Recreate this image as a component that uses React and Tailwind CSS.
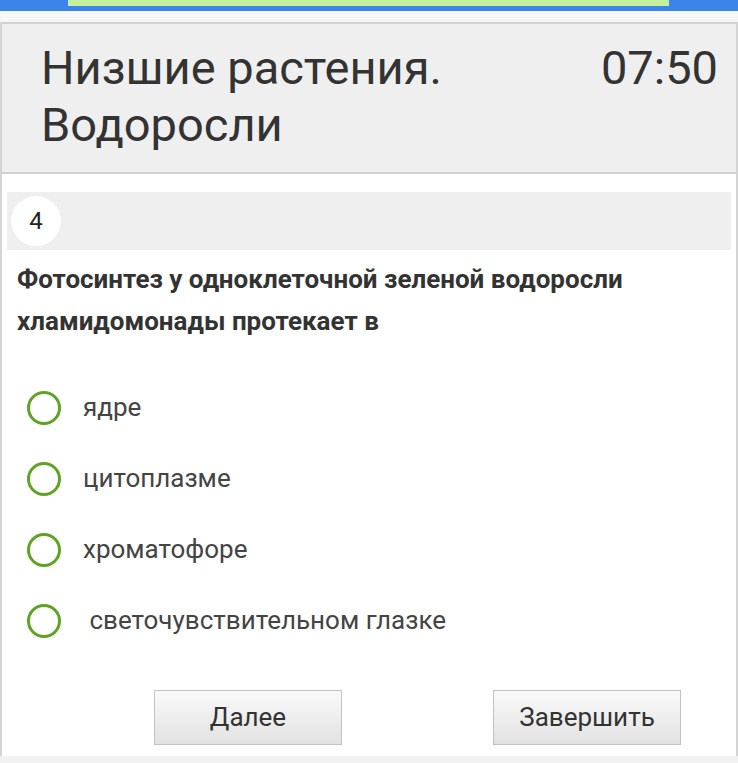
import React, { useState } from "react";

const options = [
  "ядре",
  "цитоплазме",
  "хроматофоре",
  "\u00a0светочувствительном глазке",
];

const App = () => {
  const [selected, setSelected] = useState(null);

  return (
    <div
      className="w-full h-[763px] bg-white overflow-hidden text-[#333]"
      style={{ fontFamily: "Roboto, 'Noto Sans', sans-serif" }}
    >
      {/* Top bar */}
      <div className="h-[11px] bg-[#3d84ea]">
        <div className="ml-[68px] w-[601px] h-[6px] bg-[#c4ef9d]" />
      </div>
      <div className="h-[11px] bg-[#f6f6f6]" />

      <div className="border-x-2 border-[#d4d4d4] h-[734px] flex flex-col">
        {/* Header */}
        <div className="bg-[#efefef] border-y-2 border-[#d0d0d0] h-[152px] pl-[39px] pr-[18px] pt-[15px] flex justify-between items-start">
          <h1 className="text-[47px] leading-[57px] font-normal text-[#333]">
            Низшие растения.
            <br />
            Водоросли
          </h1>
          <span className="text-[47px] leading-[57px] text-[#333]">07:50</span>
        </div>

        {/* Question */}
        <div className="flex-1 px-[5px] pt-[18px]">
          <div className="h-[58px] bg-[#efefef] flex items-center pl-[4px]">
            <div className="w-[50px] h-[50px] rounded-full bg-white flex items-center justify-center text-[24px] text-[#222]">
              4
            </div>
          </div>

          <p className="mt-[8px] pl-[10px] text-[26px] leading-[42px] font-bold text-[#333]">
            Фотосинтез у одноклеточной зеленой водоросли
            <br />
            хламидомонады протекает в
          </p>

          <div className="mt-[30px]">
            {options.map((opt, i) => (
              <label
                key={i}
                className="h-[71px] flex items-center cursor-pointer"
                onClick={() => setSelected(i)}
              >
                <span className="ml-[20px] w-[34px] h-[34px] rounded-full border-[3px] border-[#5ea323] flex items-center justify-center">
                  {selected === i && (
                    <span className="w-[16px] h-[16px] rounded-full bg-[#5ea323]" />
                  )}
                </span>
                <span className="ml-[22px] text-[26px] text-[#444]">{opt}</span>
              </label>
            ))}
          </div>

          <div className="mt-[34px] flex">
            <button className="ml-[147px] w-[188px] h-[55px] border border-[#c2c2c2] bg-gradient-to-b from-[#fafafa] to-[#e2e2e2] text-[26px] text-[#333]">
              Далее
            </button>
            <button className="ml-[151px] w-[188px] h-[55px] border border-[#c2c2c2] bg-gradient-to-b from-[#fafafa] to-[#e2e2e2] text-[26px] text-[#333]">
              Завершить
            </button>
          </div>
        </div>
      </div>
      <div className="h-[8px] bg-[#f2f2f2]" />
    </div>
  );
};

export default App;
